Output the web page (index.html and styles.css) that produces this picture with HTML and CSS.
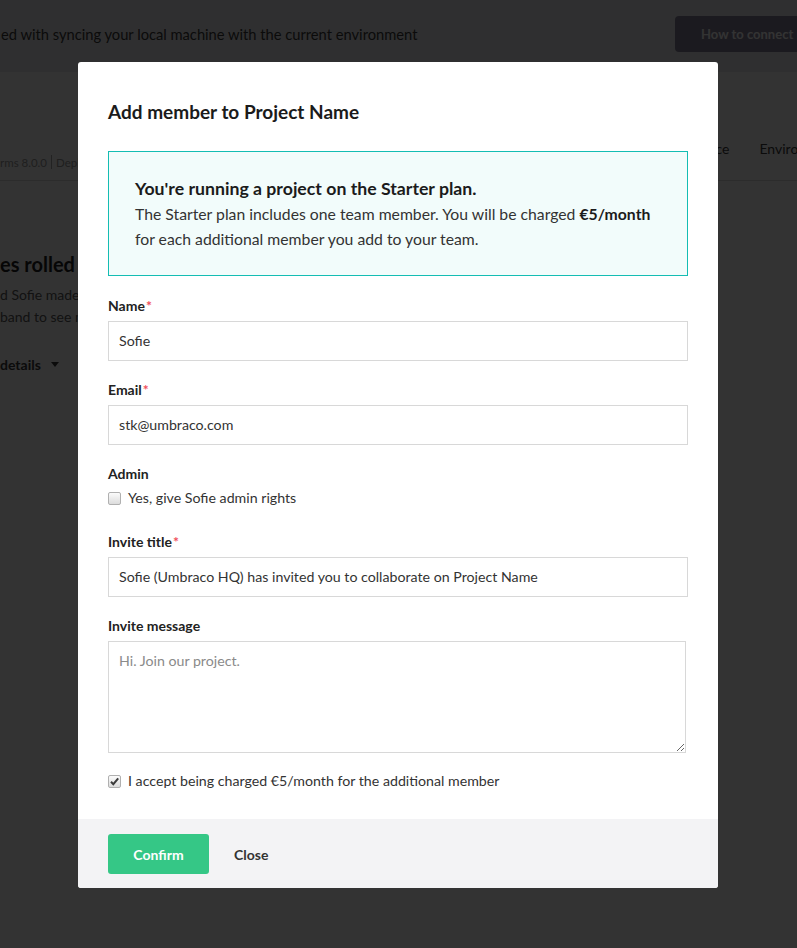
FILE: index.html
```html
<!DOCTYPE html>
<html lang="en">
<head>
<meta charset="utf-8">
<title>Add member to Project Name</title>
<link rel="stylesheet" href="styles.css">
</head>
<body>
<div class="page">
  <div class="notice">
    <span class="notice-text">ed with syncing your local machine with the current environment</span>
    <span class="notice-btn">How to connect my machine</span>
  </div>
  <div class="proj-head">
    <div class="meta">rms 8.0.0 <span class="sep"></span> Deployed</div>
    <nav class="tabs"><span>Performance</span><span>Environments</span></nav>
  </div>
  <div class="content">
    <h2 class="content-title">es rolled out</h2>
    <p class="content-text">d Sofie made changes</p>
    <p class="content-text">band to see more</p>
    <div class="details">details <span class="caret"></span></div>
  </div>
</div>
<div class="overlay"></div>

<div class="modal">
  <div class="modal-body">
    <h1 class="modal-title">Add member to Project Name</h1>
    <div class="plan-box">
      <h3 class="plan-title">You're running a project on the Starter plan.</h3>
      <p class="plan-text">The Starter plan includes one team member. You will be charged <strong>€5/month</strong> for each additional member you add to your team.</p>
    </div>

    <div class="field field-first">
      <label class="label">Name<span class="req">*</span></label>
      <div class="input">Sofie</div>
    </div>
    <div class="field">
      <label class="label">Email<span class="req">*</span></label>
      <div class="input">stk@umbraco.com</div>
    </div>
    <div class="field">
      <label class="label">Admin</label>
      <div class="check-row check-admin">
        <span class="box"></span>
        <span>Yes, give Sofie admin rights</span>
      </div>
    </div>
    <div class="field field-after-check">
      <label class="label">Invite title<span class="req">*</span></label>
      <div class="input">Sofie (Umbraco HQ) has invited you to collaborate on Project Name</div>
    </div>
    <div class="field">
      <label class="label">Invite message</label>
      <textarea class="textarea" placeholder="Hi. Join our project."></textarea>
    </div>
    <div class="check-row check-accept">
      <span class="box checked"><svg viewBox="0 0 13 13" width="13" height="13"><path d="M3 6.8 L5.3 9.2 L10.2 3.4" fill="none" stroke="#3c3c3c" stroke-width="2"/></svg></span>
      <span>I accept being charged €5/month for the additional member</span>
    </div>
  </div>
  <div class="modal-footer">
    <button class="btn-confirm">Confirm</button>
    <button class="btn-close">Close</button>
  </div>
</div>
</body>
</html>
```

FILE: styles.css
```css
* { box-sizing: border-box; }

html, body {
  margin: 0;
  padding: 0;
  width: 797px;
  height: 948px;
  overflow: hidden;
}

body {
  font-family: Lato, "Open Sans", "Liberation Sans", sans-serif;
  color: #333;
  background: #fff;
  position: relative;
}

/* ---------- underlying page ---------- */
.page {
  width: 797px;
  height: 948px;
  background: #fff;
}

.notice {
  height: 72px;
  padding-bottom: 4px;
  background: #ebebed;
  display: grid;
  grid-template-columns: 675px auto;
  align-items: center;
  white-space: nowrap;
  overflow: hidden;
}

.notice-text {
  font-size: 14.7px;
  color: #3a3a3a;
  padding-left: 1px;
}

.notice-btn {
  height: 36px;
  line-height: 36px;
  padding: 0 26px;
  border-radius: 4px;
  background: #87829a;
  color: #fff;
  font-weight: 700;
  font-size: 13px;
  width: 200px;
}

.proj-head {
  height: 109px;
  border-bottom: 1px solid #dcdcdc;
  display: grid;
  grid-template-columns: 651px auto;
  white-space: nowrap;
  overflow: hidden;
}

.meta {
  align-self: end;
  padding-bottom: 11px;
  font-size: 11.5px;
  color: #9a9a9a;
  display: flex;
  align-items: center;
  gap: 4px;
}

.sep {
  width: 1px;
  height: 14px;
  background: #aaa;
}

.tabs {
  display: flex;
  gap: 30px;
  padding-top: 68px;
  font-size: 14px;
  color: #3a3a3a;
}

.content {
  padding-top: 71px;
  white-space: nowrap;
}

.content-title {
  margin: 0 0 8px;
  font-size: 20px;
  font-weight: 700;
  line-height: 24px;
  color: #1f1f1f;
}

.content-text {
  margin: 0;
  font-size: 14px;
  line-height: 22px;
  color: #5a5a5a;
}

.details {
  margin-top: 28px;
  font-size: 14px;
  font-weight: 700;
  color: #3a3a3a;
  display: flex;
  align-items: center;
  gap: 10px;
}

.caret {
  width: 0;
  height: 0;
  border-left: 4px solid transparent;
  border-right: 4px solid transparent;
  border-top: 5px solid #3a3a3a;
}

.overlay {
  position: absolute;
  inset: 0;
  background: rgba(0, 0, 0, 0.8);
}

/* ---------- modal ---------- */
.modal {
  position: absolute;
  left: 78px;
  top: 62px;
  width: 640px;
  background: #fff;
  border-radius: 3px;
  overflow: hidden;
}

.modal-body {
  padding: 38px 30px 28px;
}

.modal-title {
  margin: 0;
  font-size: 19px;
  line-height: 24px;
  font-weight: 700;
  color: #1b1b1b;
}

.plan-box {
  margin-top: 27px;
  border: 1px solid #14bdb3;
  background: #f2fcfb;
  padding: 25px 26px 24px;
}

.plan-title {
  margin: 0;
  font-size: 17.7px;
  line-height: 24px;
  font-weight: 700;
  color: #1b1b1b;
}

.plan-text {
  margin: 0;
  font-size: 15.75px;
  line-height: 25px;
  color: #333;
}

.plan-text strong {
  color: #1b1b1b;
}

.field {
  margin-top: 19px;
}

.field-first {
  margin-top: 20px;
}

.field-after-check {
  margin-top: 24px;
}

.label {
  display: block;
  font-size: 14px;
  line-height: 20px;
  font-weight: 700;
  color: #222;
}

.req {
  color: #f0505c;
  margin-left: 1px;
}

.input {
  margin-top: 5px;
  height: 40px;
  border: 1px solid #d8d8d8;
  padding: 0 10px;
  font-size: 14.2px;
  line-height: 38px;
  color: #333;
  white-space: nowrap;
  overflow: hidden;
}

.textarea {
  display: block;
  margin-top: 5px;
  width: 578px;
  height: 112px;
  border: 1px solid #d8d8d8;
  border-radius: 0;
  padding: 9px 10px;
  font-family: Lato, "Open Sans", "Liberation Sans", sans-serif;
  font-size: 14.2px;
  line-height: 20px;
  color: #333;
  resize: both;
  outline: none;
}

.textarea::placeholder {
  color: #8a8a8a;
}

.check-row {
  display: flex;
  align-items: center;
  gap: 7px;
  font-size: 14.2px;
  line-height: 20px;
  color: #333;
}

.check-admin {
  margin-top: 4px;
}

.check-accept {
  margin-top: 18px;
}

.box {
  width: 13px;
  height: 13px;
  flex: none;
  border: 1px solid #b0b0b0;
  border-radius: 2px;
  background: linear-gradient(#fbfbfb, #dcdcdc);
  display: flex;
  align-items: center;
  justify-content: center;
}

.box svg {
  display: block;
  flex: none;
}

.modal-footer {
  background: #f3f3f5;
  padding: 15px 30px 14px;
  display: flex;
  align-items: center;
  gap: 25px;
}

.btn-confirm {
  width: 101px;
  height: 40px;
  border: 0;
  border-radius: 3px;
  background: #35c786;
  color: #fff;
  font-family: Lato, "Open Sans", "Liberation Sans", sans-serif;
  font-size: 14px;
  font-weight: 700;
  cursor: pointer;
}

.btn-close {
  border: 0;
  background: transparent;
  padding: 0;
  font-family: Lato, "Open Sans", "Liberation Sans", sans-serif;
  font-size: 14px;
  font-weight: 700;
  color: #333;
  cursor: pointer;
}
```
